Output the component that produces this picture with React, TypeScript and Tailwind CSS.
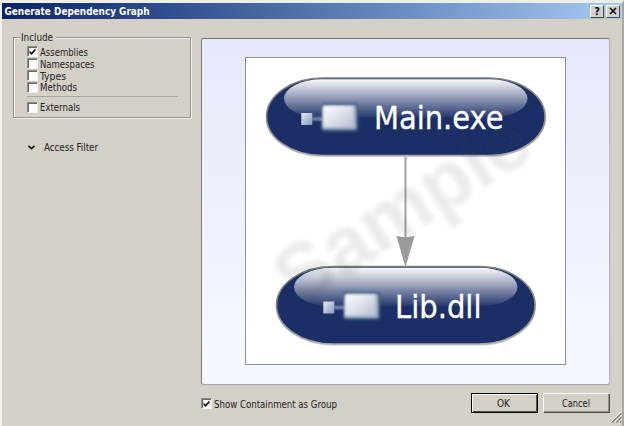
import React from "react";

const FONT = "font-['DejaVu_Sans_Condensed','DejaVu_Sans',Tahoma,sans-serif] [font-stretch:condensed]";

function Check({ label, checked = false, width }: { label: string; checked?: boolean; width: number }) {
  return (
    <label className="flex h-[11.8px] items-center gap-[2px]">
      <span className="flex h-[11px] w-[11px] shrink-0 items-center justify-center border border-r-[#f4f2ee] border-b-[#f4f2ee] border-l-[#8f8c86] border-t-[#8f8c86] bg-white shadow-[inset_1px_1px_0_#6c6965]">
        {checked && (
          <svg width="9" height="9" viewBox="0 0 9 9">
            <path d="M1.5 3.5v2.5l2 2 4-4.2V1.3L3.5 5.5z" fill="#111" />
          </svg>
        )}
      </span>
      <Label text={label} width={width} />
    </label>
  );
}

function Label({ text, width }: { text: string; width: number }) {
  return (
    <svg width={width + 2} height="14" className="shrink-0 overflow-visible">
      <text x="0" y="10.7" fontSize="10.5" textLength={width} lengthAdjust="spacingAndGlyphs" fill="#222">{text}</text>
    </svg>
  );
}

interface NodeProps {
  x: number;
  y: number;
  w: number;
  label: string;
  tx: number;
  tw: number;
  iconX: number;
}

function Node({ x, y, w, label, tx, tw, iconX }: NodeProps) {
  return (
    <g transform={`translate(${x} ${y})`}>
      <rect x="0.2" y="0.6" width={w} height="77.6" rx="56" ry="38.8" fill="none" stroke="#d2cfca" strokeWidth="1.8" />
      <rect x="0" y="0" width={w} height="77.5" rx="56" ry="38.7" fill="#1b2f66" stroke="url(#rim)" strokeWidth="1.5" />
      <rect x="17.5" y="1.3" width={w - 35} height="38.5" rx="38" ry="19.2" fill="url(#gloss)" />
      <g transform={`translate(${iconX - x} 26)`}>
        <rect x="20" y="-0.5" width="37" height="28" rx="3" fill="#3c5a7c" filter="url(#soft)" />
        <path d="M10 15H22" stroke="#8396b8" strokeWidth="3" filter="url(#edge)" />
        <rect x="0" y="9" width="11" height="12" fill="url(#metal)" filter="url(#slight)" />
        <rect x="21" y="1" width="34" height="24.5" rx="2" fill="#9fb2c8" filter="url(#edge)" />
        <rect x="22" y="2" width="30" height="21" rx="2" fill="url(#plate)" filter="url(#edge)" />
      </g>
      <text x={tx - x} y="51.3" fontSize="32" textLength={tw} lengthAdjust="spacingAndGlyphs" fill="#fff" stroke="#fff" strokeWidth="0.3">{label}</text>
    </g>
  );
}

function Graph() {
  return (
    <svg width="319" height="306" viewBox="246 58 319 306" className="block">
      <defs>
        <linearGradient id="gloss" x1="0" y1="0" x2="0" y2="1">
          <stop offset="0" stopColor="#fff" stopOpacity="0.97" />
          <stop offset="1" stopColor="#fff" stopOpacity="0.04" />
        </linearGradient>
        <linearGradient id="rim" x1="0" y1="0" x2="0" y2="1">
          <stop offset="0" stopColor="#7e7e7e" />
          <stop offset="0.6" stopColor="#8c8c8c" />
          <stop offset="1" stopColor="#a9a9ae" />
        </linearGradient>
        <linearGradient id="metal" x1="0" y1="0" x2="1" y2="1">
          <stop offset="0" stopColor="#e4e8f0" />
          <stop offset="0.5" stopColor="#b9c3d6" />
          <stop offset="1" stopColor="#8597b8" />
        </linearGradient>
        <linearGradient id="plate" x1="0" y1="0" x2="1" y2="1">
          <stop offset="0" stopColor="#fbfcfd" />
          <stop offset="0.5" stopColor="#dde1ea" />
          <stop offset="1" stopColor="#b4bfd3" />
        </linearGradient>
        <filter id="soft" x="-30%" y="-30%" width="160%" height="160%"><feGaussianBlur stdDeviation="1.5" /></filter>
        <filter id="edge" filterUnits="userSpaceOnUse" x="-5" y="-5" width="70" height="40"><feGaussianBlur stdDeviation="0.8" /></filter>
        <filter id="slight" x="-20%" y="-20%" width="140%" height="140%"><feGaussianBlur stdDeviation="0.35" /></filter>
        <filter id="mark" x="-20%" y="-20%" width="140%" height="140%"><feGaussianBlur stdDeviation="2" /></filter>
      </defs>
      <Node x={266.5} y={78} w={278.5} label="Main.exe" tx={374} tw={129.5} iconX={301.3} />
      <Node x={276.5} y={266.5} w={258.5} label="Lib.dll" tx={395} tw={86.5} iconX={323.3} />
      <path d="M405.5 157V238" stroke="#a0a0a0" strokeWidth="2" />
      <path d="M396.3 235.8Q405.5 238.5 414.7 235.8L405.5 267z" fill="#9c9c9c" />
      <text transform="translate(296 308) rotate(-32.5)" fontSize="80" fontWeight="bold" textLength="285" lengthAdjust="spacingAndGlyphs" fill="#332f2f" fillOpacity="0.1" filter="url(#mark)" className="font-['Liberation_Sans',Arial,sans-serif] [font-stretch:normal]">Sample</text>
    </svg>
  );
}

export default function App() {
  return (
    <div className={`flex h-[426px] w-[624px] flex-col overflow-hidden border-l-2 border-r-2 border-t-[3px] border-l-[#f3f2ef] border-r-[#aaa7a2] border-t-[#efeeeb] bg-[#d4d0c8] text-[10px] text-[#222] ${FONT}`}>
      <header className="flex h-4 shrink-0 items-center justify-between bg-linear-to-r from-[#0a246a] to-[#a6caf0] pl-[2px] pr-[2px]">
        <svg width="170" height="16" className="overflow-visible">
          <text x="0.5" y="11.5" fontSize="10.8" fontWeight="bold" textLength="145" lengthAdjust="spacingAndGlyphs" fill="#fff">Generate Dependency Graph</text>
        </svg>
        <div className="flex gap-[2px]">
          <button className="flex h-[13px] w-[14px] items-center justify-center border border-b-[#504e4a] border-l-white border-r-[#504e4a] border-t-white bg-[#d4d0c8] text-[11px] leading-none font-bold text-black">?</button>
          <button className="flex h-[13px] w-[14px] items-center justify-center border border-b-[#504e4a] border-l-white border-r-[#504e4a] border-t-white bg-[#d4d0c8]">
            <svg width="8" height="8" viewBox="0 0 8 8"><path d="M1 1l6 6M7 1L1 7" stroke="#000" strokeWidth="1.6" /></svg>
          </button>
        </div>
      </header>
      <main className="flex min-h-0 flex-1">
        <aside className="w-[199px] shrink-0 pl-[11px] pt-[18px]">
          <section className="h-[81px] w-[178px] border border-[#96938e] pl-[13px] shadow-[inset_1px_1px_0_#f4f2ee,1px_1px_0_#f4f2ee]">
            <h2 className="-mt-[8px] -ml-[7px] flex h-[14px] w-[36px] bg-[#d4d0c8] pl-[1px]"><Label text="Include" width={32} /></h2>
            <div className="mt-[2px]">
              <Check label="Assemblies" checked width={48} />
              <Check label="Namespaces" width={54.5} />
              <Check label="Types" width={26} />
              <Check label="Methods" width={37} />
            </div>
            <hr className="mt-[3px] mb-[4px] w-[151px] border-t border-[#aaa7a1]" />
            <Check label="Externals" width={40} />
          </section>
          <div className="mt-[22px] flex h-[14px] items-center gap-[9px] pl-[15px]">
            <svg width="7" height="5" viewBox="0 0 7 5"><path d="M.5 .8L3.5 3.6 6.5 .8" fill="none" stroke="#111" strokeWidth="1.6" /></svg>
            <Label text="Access Filter" width={54} />
          </div>
        </aside>
        <div className="flex w-[409px] flex-col pt-[19px]">
          <section className="flex h-[347px] w-[409px] shrink-0 justify-center rounded-[3px] border border-b-[#aaa8a8] border-l-[#858383] border-r-[#b5b3b3] border-t-[#777575] bg-linear-to-b from-[#e6e9fb] to-[#f5f9ff] pt-[18px] shadow-[0_0_1px_#8b8986]">
            <div className="h-[308px] w-[321px] border border-[#8f9092] bg-white"><Graph /></div>
          </section>
          <footer className="flex justify-between pt-[8px]">
            <div className="pt-[5px]"><Check label="Show Containment as Group" checked width={123} /></div>
            <div className="flex gap-[5px]">
              <button className="flex h-[20px] w-[67px] items-center justify-center border border-black pb-px shadow-[inset_1px_1px_0_#fff,inset_-1px_-1px_0_#55524e]"><Label text="OK" width={13} /></button>
              <button className="flex h-[20px] w-[67px] items-center justify-center border border-b-[#504e4a] border-l-white border-r-[#504e4a] border-t-white pb-px shadow-[inset_-1px_-1px_0_#96938e]"><Label text="Cancel" width={28} /></button>
            </div>
          </footer>
        </div>
        <div className="flex flex-1 items-end justify-end pb-[3px]">
          <svg width="11" height="11" viewBox="0 0 11 11" className="shrink-0"><path d="M1 10.5L10.5 1M5 10.5l5.5-5.5M9 10.5l1.5-1.5" stroke="#85827c" strokeWidth="1.3" /><path d="M0 10L10 0M4 10l6.5-6.5M8 10l2.5-2.5" stroke="#fff" strokeWidth=".8" /></svg>
        </div>
      </main>
    </div>
  );
}
